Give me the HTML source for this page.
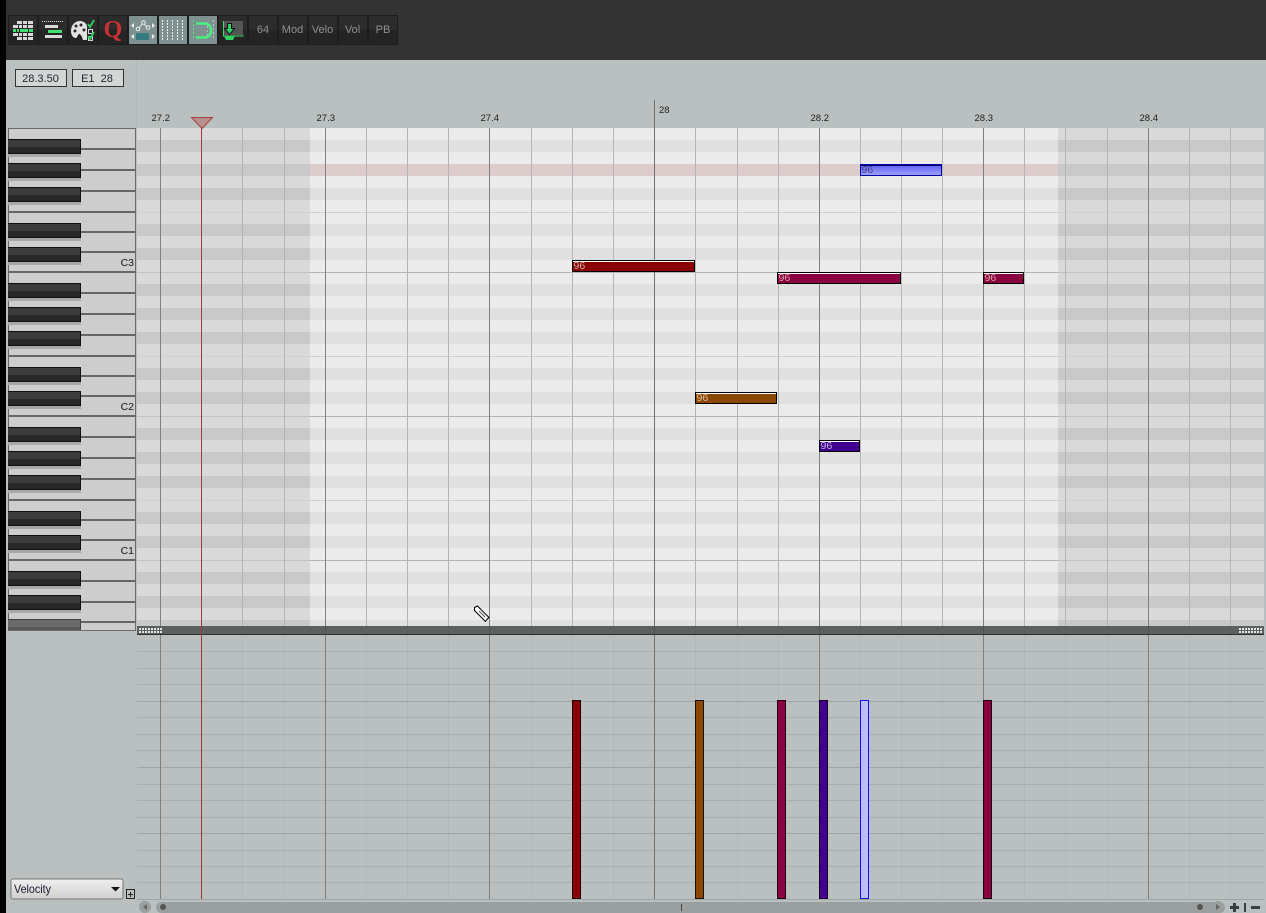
<!DOCTYPE html>
<html><head><meta charset="utf-8"><style>
html,body{margin:0;padding:0;background:#b9c0bf;overflow:hidden}
svg{display:block}
text{font-family:"Liberation Sans",sans-serif}
.c{shape-rendering:crispEdges}
</style></head><body>
<svg width="1266" height="913" viewBox="0 0 1266 913" xmlns="http://www.w3.org/2000/svg">
<defs>
<pattern id="rowsO" x="0" y="128" width="10" height="144" patternUnits="userSpaceOnUse">
<rect width="10" height="144" fill="#d9d9d9"/>
<rect y="12" width="10" height="12" fill="#c9c9c9"/><rect y="36" width="10" height="12" fill="#c9c9c9"/><rect y="60" width="10" height="12" fill="#c9c9c9"/><rect y="96" width="10" height="12" fill="#c9c9c9"/><rect y="120" width="10" height="12" fill="#c9c9c9"/>
</pattern>
<pattern id="rowsA" x="0" y="128" width="10" height="144" patternUnits="userSpaceOnUse">
<rect width="10" height="144" fill="#ebebeb"/>
<rect y="12" width="10" height="12" fill="#e0e0e0"/><rect y="36" width="10" height="12" fill="#e0e0e0"/><rect y="60" width="10" height="12" fill="#e0e0e0"/><rect y="96" width="10" height="12" fill="#e0e0e0"/><rect y="120" width="10" height="12" fill="#e0e0e0"/>
</pattern>
<linearGradient id="bl" x1="0" y1="0" x2="0" y2="1"><stop offset="0" stop-color="#5a5aff"/><stop offset="1" stop-color="#a2a2ff"/></linearGradient>
<linearGradient id="cb" x1="0" y1="0" x2="0" y2="1"><stop offset="0" stop-color="#f0f0f0"/><stop offset="1" stop-color="#cfcfcf"/></linearGradient>
</defs>
<g class="c">
<rect width="1266" height="913" fill="#b9c0bf"/>
<rect width="6" height="913" fill="#000"/>
<rect x="6" width="1260" height="60" fill="#333"/>
<rect x="136" y="60" width="1" height="68" fill="#b2b9b8"/>

<!-- toolbar buttons -->
<rect x="8" y="15" width="390" height="30" fill="#1e1e1e"/>
<g fill="#2c2c2c">
<rect x="9" y="16" width="28" height="14"/><rect x="39" y="16" width="28" height="14"/><rect x="69" y="16" width="28" height="14"/><rect x="99" y="16" width="28" height="14"/><rect x="219" y="16" width="28" height="14"/><rect x="249" y="16" width="28" height="14"/><rect x="279" y="16" width="28" height="14"/><rect x="309" y="16" width="28" height="14"/><rect x="339" y="16" width="28" height="14"/><rect x="369" y="16" width="28" height="14"/>
</g>
<g fill="#242424">
<rect x="9" y="30" width="28" height="14"/><rect x="39" y="30" width="28" height="14"/><rect x="69" y="30" width="28" height="14"/><rect x="99" y="30" width="28" height="14"/><rect x="219" y="30" width="28" height="14"/><rect x="249" y="30" width="28" height="14"/><rect x="279" y="30" width="28" height="14"/><rect x="309" y="30" width="28" height="14"/><rect x="339" y="30" width="28" height="14"/><rect x="369" y="30" width="28" height="14"/>
</g>
<g fill="#7f9090"><rect x="129" y="16" width="28" height="28"/><rect x="159" y="16" width="28" height="28"/><rect x="189" y="16" width="28" height="28"/></g>

<!-- icon 1 -->
<g fill="#d8d8d8">
<rect x="17" y="21" width="5" height="3"/><rect x="23" y="21" width="4" height="3"/><rect x="28" y="21" width="5" height="3"/>
<rect x="13" y="25" width="5" height="3"/><rect x="19" y="25" width="3" height="3"/><rect x="23" y="25" width="4" height="3"/><rect x="28" y="25" width="5" height="3"/>
<rect x="13" y="33" width="5" height="3"/><rect x="19" y="33" width="3" height="3"/><rect x="23" y="33" width="4" height="3"/><rect x="28" y="33" width="5" height="3"/>
<rect x="17" y="37" width="5" height="3"/><rect x="23" y="37" width="4" height="3"/><rect x="28" y="37" width="5" height="3"/>
</g>
<g fill="#3fe070"><rect x="13" y="29" width="3" height="3"/><rect x="17" y="29" width="2" height="3"/><rect x="20" y="29" width="8" height="3"/><rect x="29" y="29" width="4" height="3"/></g>
<!-- icon 2 -->
<path d="M42 21.500h21" stroke="#e0e0e0" stroke-dasharray="1 1" fill="none"/>
<rect x="45" y="25" width="13" height="3" fill="#d8d8d8"/>
<rect x="48" y="30" width="14" height="3" fill="#3fe070"/>
<rect x="45" y="35" width="17" height="3" fill="#d8d8d8"/>
</g>
<!-- icon 3 palette -->
<path d="M71 31c0-6 4-10 9-10 4 0 7 3 7 6v13h-4c-1-3-2-6-4-6-1 0-2 4-3 4-3 0-5-3-5-7z" fill="#e2e2e2"/>
<g fill="#2a2a2a"><circle cx="76" cy="26" r="1.500"/><circle cx="81" cy="25" r="1.500"/><circle cx="84" cy="30" r="1.500"/><circle cx="75" cy="31" r="1.500"/></g>
<g class="c" fill="none" stroke="#d8d8d8"><rect x="88.500" y="29.500" width="4" height="4"/><rect x="88.500" y="36.500" width="4" height="4"/></g>
<path d="M88 24l2 3 4-7M88 36l2 3 4-7" fill="none" stroke="#2ec85a" stroke-width="2"/>
<!-- icon 4 Q -->
<text x="113" y="37" font-size="24" font-weight="bold" text-anchor="middle" fill="#c83232" style="font-family:'Liberation Serif',serif">Q</text>
<!-- icon 5 -->
<path d="M138 29l5-6 5 5" fill="none" stroke="#e8e8e8" stroke-width="1"/>
<g fill="#7f9090" stroke="#eee"><circle cx="138" cy="29" r="1.800"/><circle cx="143.500" cy="22.500" r="1.800"/><circle cx="148" cy="27.500" r="1.800"/></g>
<g fill="#f0f0f0"><path d="M134 23l-3 2.500 3 2.500zM152 23l3 2.500-3 2.500zM134 34l-3 2.500 3 2.500zM152 34l3 2.500-3 2.500z"/></g>
<rect class="c" x="136" y="33" width="13" height="7" fill="#357a80"/>
<!-- icon 6 -->
<path class="c" d="M162.500 20v20M167.500 20v20M172.500 20v20M177.500 20v20M182.500 20v20" stroke="#eee" stroke-dasharray="2 1" fill="none"/>
<!-- icon 7 -->
<path class="c" d="M213.500 20v20M207.500 22v16" stroke="#b0c8c0" stroke-dasharray="2 2" fill="none"/>
<path class="c" d="M193.500 20v20" stroke="#48f080" stroke-dasharray="2 2" fill="none"/>
<path d="M196 23.500h8c5 0 7 3 7 7s-2 7-7 7h-8" fill="none" stroke="#48f080" stroke-width="2.500"/>
<!-- icon 8 -->
<rect class="c" x="224" y="21" width="19" height="14" fill="#555"/>
<path class="c" d="M223.500 21v15h20" fill="none" stroke="#3fe070"/>
<path d="M227.500 23.500h4v5h3l-5 6-5-6h3z" fill="#32d060" stroke="#111"/>
<path d="M224 36h11l-2 4h-7z" fill="#2fd060"/>
<!-- toolbar labels -->
<g font-size="11" fill="#909090" text-anchor="middle">
<text x="263" y="33">64</text><text x="292.500" y="33">Mod</text><text x="322.500" y="33">Velo</text><text x="352.500" y="33">Vol</text><text x="383" y="33">PB</text>
</g>

<!-- position boxes -->
<g class="c"><rect x="15.500" y="69.500" width="51" height="17" fill="#d2d6d5" stroke="#333"/><rect x="72.500" y="69.500" width="51" height="17" fill="#d2d6d5" stroke="#333"/></g>
<text x="40.500" y="82" font-size="11" fill="#1c2430" text-anchor="middle">28.3.50</text>
<text x="97" y="82" font-size="11" fill="#1c2430" text-anchor="middle" xml:space="preserve">E1  28</text>

<!-- ruler labels -->
<g font-size="9.500" fill="#222">
<text x="151.500" y="121">27.2</text><text x="316.500" y="121">27.3</text><text x="480.500" y="121">27.4</text><text x="659" y="113">28</text><text x="810.500" y="121">28.2</text><text x="974.500" y="121">28.3</text><text x="1139.500" y="121">28.4</text>
</g>

<g class="c">
<!-- grid -->
<rect x="137" y="128" width="1127" height="498" fill="url(#rowsO)"/>
<rect x="310" y="128" width="748" height="498" fill="url(#rowsA)"/>
<rect x="310" y="164" width="748" height="12" fill="#dccccc"/>
<path d="M137 212.500h1127M137 356.500h1127M137 500.500h1127" stroke="#d0d0d0" fill="none"/>
<path d="M310 272.500h748M310 416.500h748M310 560.500h748" stroke="#b4b4b4" fill="none"/>
<path d="M137 272.500h173M137 416.500h173M137 560.500h173M1058 272.500h206M1058 416.500h206M1058 560.500h206" stroke="#c2c2c2" fill="none"/>
<!-- minor lines -->
<path d="M242.500 128v498M284.500 128v498M366.500 128v498M407.500 128v498M448.500 128v498M531.500 128v498M572.500 128v498M613.500 128v498M695.500 128v498M737.500 128v498M778.500 128v498M860.500 128v498M901.500 128v498M942.500 128v498M1024.500 128v498M1065.500 128v498M1107.500 128v498M1189.500 128v498M1230.500 128v498" stroke="#b4b4b4" fill="none"/>
<path d="M242.500 635v264M284.500 635v264M366.500 635v264M407.500 635v264M448.500 635v264M531.500 635v264M572.500 635v264M613.500 635v264M695.500 635v264M737.500 635v264M778.500 635v264M860.500 635v264M901.500 635v264M942.500 635v264M1024.500 635v264M1065.500 635v264M1107.500 635v264M1189.500 635v264M1230.500 635v264" stroke="#b1b8b7" fill="none"/>
<!-- lower horizontal lines -->
<path d="M137 651.500h1127M137 668.500h1127M137 684.500h1127M137 717.500h1127M137 734.500h1127M137 750.500h1127M137 784.500h1127M137 800.500h1127M137 817.500h1127M137 850.500h1127M137 866.500h1127M137 882.500h1127" stroke="#a9b0af" fill="none"/>
<path d="M137 701.500h1127M137 767.500h1127M137 833.500h1127M137 899.500h1127" stroke="#9ea5a4" fill="none"/>
<!-- major lines -->
<path d="M160.500 128v771M325.500 128v771M489.500 128v771M819.500 128v771M983.500 128v771M1148.500 128v771" stroke="#808080" fill="none"/>
<path d="M654.500 100v799" stroke="#707070" fill="none"/>
<!-- divider -->
<rect x="137" y="626" width="1127" height="8" fill="#5c6060"/>
<rect x="137" y="634" width="1127" height="1" fill="#2e3030"/>
<path d="M160.500 626v8M325.500 626v8M489.500 626v8M654.500 626v8M819.500 626v8M983.500 626v8M1148.500 626v8" stroke="#515454" fill="none"/>
<g fill="#e4e4e4">
<path d="M139 628h2v2h-2zM142 628h2v2h-2zM145 628h2v2h-2zM148 628h2v2h-2zM151 628h2v2h-2zM154 628h2v2h-2zM157 628h2v2h-2zM160 628h2v2h-2zM139 631h2v2h-2zM142 631h2v2h-2zM145 631h2v2h-2zM148 631h2v2h-2zM151 631h2v2h-2zM154 631h2v2h-2zM157 631h2v2h-2zM160 631h2v2h-2z"/>
<path d="M1239 628h2v2h-2zM1242 628h2v2h-2zM1245 628h2v2h-2zM1248 628h2v2h-2zM1251 628h2v2h-2zM1254 628h2v2h-2zM1257 628h2v2h-2zM1260 628h2v2h-2zM1239 631h2v2h-2zM1242 631h2v2h-2zM1245 631h2v2h-2zM1248 631h2v2h-2zM1251 631h2v2h-2zM1254 631h2v2h-2zM1257 631h2v2h-2zM1260 631h2v2h-2z"/>
</g>
<!-- playhead -->
<rect x="201" y="128" width="1" height="771" fill="#a03838"/>
</g>
<path d="M191.500 117.500h21l-10.500 11z" fill="#b89090" stroke="#a84040"/>

<!-- piano -->
<g class="c">
<rect x="8" y="128" width="128" height="502" fill="#cdcdcd"/>
<path d="M8 128.500h128M135.500 128v502M8.500 128v502M8 630.500h128" stroke="#6a6a6a" fill="none"/>
<path d="M81 149h54M81 170h54M81 191h54M8 212h127M81 232h54M81 252h54M8 272h127M81 293h54M81 314h54M81 335h54M8 356h127M81 376h54M81 396h54M8 416h127M81 437h54M81 458h54M81 479h54M8 500h127M81 520h54M81 540h54M8 560h127M81 581h54M81 602h54M81 622h54" stroke="#666" stroke-width="2" fill="none"/>
<g fill="#a8a8a8"><rect x="8" y="154" width="73" height="3"/><rect x="8" y="178" width="73" height="3"/><rect x="8" y="202" width="73" height="3"/><rect x="8" y="238" width="73" height="3"/><rect x="8" y="262" width="73" height="3"/><rect x="8" y="298" width="73" height="3"/><rect x="8" y="322" width="73" height="3"/><rect x="8" y="346" width="73" height="3"/><rect x="8" y="382" width="73" height="3"/><rect x="8" y="406" width="73" height="3"/><rect x="8" y="442" width="73" height="3"/><rect x="8" y="466" width="73" height="3"/><rect x="8" y="490" width="73" height="3"/><rect x="8" y="526" width="73" height="3"/><rect x="8" y="550" width="73" height="3"/><rect x="8" y="586" width="73" height="3"/><rect x="8" y="610" width="73" height="3"/></g>
<g fill="#111"><rect x="8" y="139" width="73" height="15"/><rect x="8" y="163" width="73" height="15"/><rect x="8" y="187" width="73" height="15"/><rect x="8" y="223" width="73" height="15"/><rect x="8" y="247" width="73" height="15"/><rect x="8" y="283" width="73" height="15"/><rect x="8" y="307" width="73" height="15"/><rect x="8" y="331" width="73" height="15"/><rect x="8" y="367" width="73" height="15"/><rect x="8" y="391" width="73" height="15"/><rect x="8" y="427" width="73" height="15"/><rect x="8" y="451" width="73" height="15"/><rect x="8" y="475" width="73" height="15"/><rect x="8" y="511" width="73" height="15"/><rect x="8" y="535" width="73" height="15"/><rect x="8" y="571" width="73" height="15"/><rect x="8" y="595" width="73" height="15"/></g>
<g fill="#3c3c3c"><rect x="8" y="140" width="72" height="7"/><rect x="8" y="164" width="72" height="7"/><rect x="8" y="188" width="72" height="7"/><rect x="8" y="224" width="72" height="7"/><rect x="8" y="248" width="72" height="7"/><rect x="8" y="284" width="72" height="7"/><rect x="8" y="308" width="72" height="7"/><rect x="8" y="332" width="72" height="7"/><rect x="8" y="368" width="72" height="7"/><rect x="8" y="392" width="72" height="7"/><rect x="8" y="428" width="72" height="7"/><rect x="8" y="452" width="72" height="7"/><rect x="8" y="476" width="72" height="7"/><rect x="8" y="512" width="72" height="7"/><rect x="8" y="536" width="72" height="7"/><rect x="8" y="572" width="72" height="7"/><rect x="8" y="596" width="72" height="7"/></g>
<g fill="#272727"><rect x="8" y="147" width="72" height="6"/><rect x="8" y="171" width="72" height="6"/><rect x="8" y="195" width="72" height="6"/><rect x="8" y="231" width="72" height="6"/><rect x="8" y="255" width="72" height="6"/><rect x="8" y="291" width="72" height="6"/><rect x="8" y="315" width="72" height="6"/><rect x="8" y="339" width="72" height="6"/><rect x="8" y="375" width="72" height="6"/><rect x="8" y="399" width="72" height="6"/><rect x="8" y="435" width="72" height="6"/><rect x="8" y="459" width="72" height="6"/><rect x="8" y="483" width="72" height="6"/><rect x="8" y="519" width="72" height="6"/><rect x="8" y="543" width="72" height="6"/><rect x="8" y="579" width="72" height="6"/><rect x="8" y="603" width="72" height="6"/></g>
<rect x="8" y="619" width="73" height="11" fill="#444"/>
<rect x="8" y="620" width="72" height="7" fill="#6a6a6a"/>
<rect x="8" y="627" width="72" height="3" fill="#585858"/>
<rect x="8" y="630" width="128" height="1" fill="#6a6a6a"/>
</g>
<g font-size="10.500" fill="#1a1a1a" text-anchor="end"><text x="134" y="266">C3</text><text x="134" y="410">C2</text><text x="134" y="554">C1</text></g>

<!-- notes -->
<g class="c">
<rect x="572.500" y="260.500" width="122" height="11" fill="#8b0000" stroke="#000"/><rect x="573" y="261" width="121" height="1" fill="#fff"/>
<rect x="777.500" y="272.500" width="123" height="11" fill="#8b0040" stroke="#000"/><rect x="778" y="273" width="122" height="1" fill="#fff"/>
<rect x="983.500" y="272.500" width="40" height="11" fill="#8b0040" stroke="#000"/><rect x="984" y="273" width="39" height="1" fill="#fff"/>
<rect x="695.500" y="392.500" width="81" height="11" fill="#8b4700" stroke="#000"/><rect x="696" y="393" width="80" height="1" fill="#fff"/>
<rect x="819.500" y="440.500" width="40" height="11" fill="#42008e" stroke="#000"/><rect x="820" y="441" width="39" height="1" fill="#fff"/>
<rect x="860.500" y="164.500" width="81" height="11" fill="url(#bl)" stroke="#0000b8"/><rect x="861" y="165" width="80" height="1" fill="#000060"/>
</g>
<g font-size="10.500">
<g fill="#d8a8a8"><text x="573.500" y="269">96</text><text x="778.500" y="281">96</text><text x="984.500" y="281">96</text></g>
<text x="696.500" y="401" fill="#d8bca0">96</text>
<text x="820.500" y="449" fill="#c8b0e8">96</text>
<text x="861.500" y="173" fill="#404070">96</text>
</g>

<!-- velocity bars -->
<g class="c">
<rect x="572.500" y="700.500" width="8" height="198" fill="#8b0000" stroke="#1a0000"/>
<rect x="695.500" y="700.500" width="8" height="198" fill="#8b4700" stroke="#1a1000"/>
<rect x="777.500" y="700.500" width="8" height="198" fill="#8b0040" stroke="#1a0010"/>
<rect x="819.500" y="700.500" width="8" height="198" fill="#42008e" stroke="#120028"/>
<rect x="860.500" y="700.500" width="8" height="198" fill="#bcbcff" stroke="#1010ff"/>
<rect x="983.500" y="700.500" width="8" height="198" fill="#8b0040" stroke="#1a0010"/>
</g>

<!-- pencil cursor -->
<path d="M474.500 607.500l3-1.500 11.500 11.500-2.500 2.500 -1 1.500-11-11z" fill="#fff" stroke="#000"/>
<path d="M479 611l6 6M481 610l5 5" stroke="#555" fill="none"/>

<!-- velocity combo -->
<rect x="11" y="879" width="112" height="20" rx="2" fill="url(#cb)" stroke="#777"/>
<text x="14" y="893" font-size="12" fill="#1a1a30" textLength="37" lengthAdjust="spacingAndGlyphs">Velocity</text>
<path d="M111 887h9l-4.500 4.500z" fill="#111"/>
<g class="c"><rect x="126.500" y="889.500" width="8" height="9" fill="none" stroke="#222"/><path d="M128 894.500h5M130.500 892v5" stroke="#222" fill="none"/></g>

<!-- scrollbar -->
<rect x="156" y="902" width="1069" height="11" rx="5.500" fill="#9aa09f"/>
<circle cx="145" cy="907" r="6" fill="#9aa09f"/>
<path d="M147 904v6l-4-3z" fill="#666"/>
<circle cx="163" cy="907" r="3" fill="#555"/>
<circle cx="1200" cy="907" r="3" fill="#555"/>
<circle cx="1218" cy="907" r="6" fill="#9aa09f"/>
<path d="M1216 904v6l4-3z" fill="#666"/>
<g class="c">
<rect x="681" y="904" width="1" height="7" fill="#444"/>
<path d="M1230 906h9v3h-9zM1233 903h3v9h-3z" fill="#3a3f3f"/>
<rect x="1244" y="903" width="2" height="9" fill="#3a3f3f"/>
<rect x="1251" y="906" width="9" height="3" fill="#3a3f3f"/>
</g>
</svg>
</body></html>
